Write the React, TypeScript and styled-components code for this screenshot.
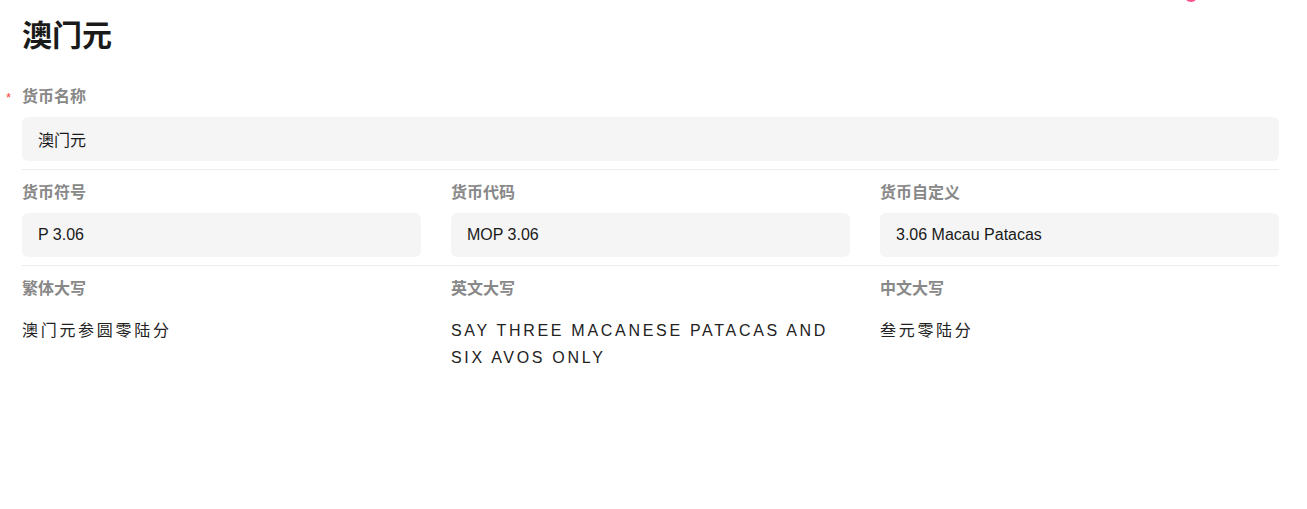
import styled, { createGlobalStyle } from 'styled-components';

const GlobalStyle = createGlobalStyle`
  body {
    margin: 0;
    background: #ffffff;
    font-family: "Liberation Sans", "Noto Sans CJK SC", sans-serif;
    color: #1a1a1a;
  }
`

const Page = styled.div`
  position: relative;
  padding: 0 28px 0 22px;
  width: 1257px;
`

const Dot = styled.span`
  position: absolute;
  left: 1184px;
  top: -12px;
  width: 14px;
  height: 14px;
  border-radius: 50%;
  background: #ff4f8b;
`

const Title = styled.h1`
  margin: 0;
  padding-top: 16px;
  font-size: 30px;
  line-height: 40px;
  font-weight: 700;
  color: #1a1a1a;
`

const Section = styled.div`
  margin-top: 29px;
`

const Row = styled.div<{ $cols: number }>`
  display: grid;
  grid-template-columns: repeat(${({ $cols }) => $cols}, 1fr);
  column-gap: 30px;
  padding: 0 0 8px;
  border-bottom: 1px solid #ececec;
  margin-bottom: 11px;

  &:last-child {
    border-bottom: none;
  }
`

const Item = styled.div``

const Label = styled.div<{ $required?: boolean }>`
  position: relative;
  font-size: 16px;
  line-height: 24px;
  font-weight: 700;
  color: #888888;
  margin-bottom: 8px;

  &::before {
    content: ${({ $required }) => ($required ? "'*'" : 'none')};
    position: absolute;
    left: -16px;
    top: 1px;
    color: #f5483b;
    font-size: 13px;
    font-weight: 400;
  }
`

const Field = styled.div`
  height: 44px;
  display: flex;
  align-items: center;
  padding: 0 16px;
  background: #f5f5f5;
  border-radius: 6px;
  font-size: 16px;
  color: #1a1a1a;
`

const Value = styled.div`
  padding-top: 8px;
  font-size: 16px;
  line-height: 27px;
  letter-spacing: 2.7px;
  color: #222222;
`

export default function App() {
  return (
    <>
      <GlobalStyle />
      <Page>
        <Dot />
        <Title>澳门元</Title>
        <Section>
          <Row $cols={1}>
            <Item>
              <Label $required>货币名称</Label>
              <Field>澳门元</Field>
            </Item>
          </Row>
          <Row $cols={3}>
            <Item>
              <Label>货币符号</Label>
              <Field>P 3.06</Field>
            </Item>
            <Item>
              <Label>货币代码</Label>
              <Field>MOP 3.06</Field>
            </Item>
            <Item>
              <Label>货币自定义</Label>
              <Field>3.06 Macau Patacas</Field>
            </Item>
          </Row>
          <Row $cols={3}>
            <Item>
              <Label>繁体大写</Label>
              <Value>澳门元参圆零陆分</Value>
            </Item>
            <Item>
              <Label>英文大写</Label>
              <Value>SAY THREE MACANESE PATACAS AND SIX AVOS ONLY</Value>
            </Item>
            <Item>
              <Label>中文大写</Label>
              <Value>叁元零陆分</Value>
            </Item>
          </Row>
        </Section>
      </Page>
    </>
  );
}
